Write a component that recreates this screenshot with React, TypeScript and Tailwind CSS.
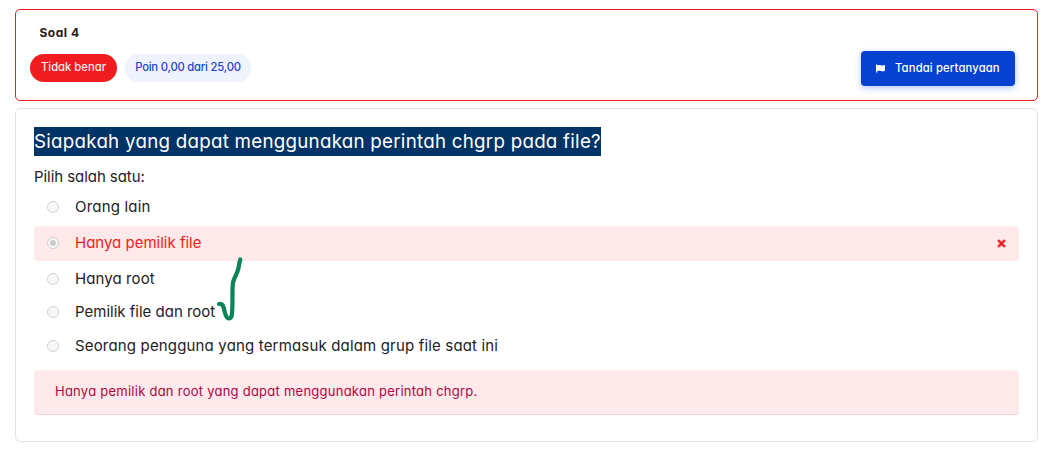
import type { ReactNode } from "react";
import { FaTimes } from "react-icons/fa";

type Option = {
  label: string;
  text: string;
  row: string;
  selected?: boolean;
};

const options: Option[] = [
  { label: "Orang lain", text: "pt-0.5 tracking-[0.2px]", row: "h-[33px]" },
  {
    label: "Hanya pemilik file",
    text: "",
    row: "mt-[3px] mb-px h-[35px] bg-[#ffe9ea] text-[#f11c20]",
    selected: true,
  },
  { label: "Hanya root", text: "pt-0.5 tracking-[0.1px]", row: "h-[33px]" },
  { label: "Pemilik file dan root", text: "pt-0.5", row: "h-[33px]" },
  {
    label: "Seorang pengguna yang termasuk dalam grup file saat ini",
    text: "pt-0.5 tracking-[0.165px]",
    row: "h-[35px]",
  },
];

function Badge({ className, children }: { className: string; children: ReactNode }) {
  return (
    <span className={`inline-flex h-7 items-center justify-center whitespace-nowrap rounded-full pb-0.5 text-[11.25px] font-medium ${className}`}>
      {children}
    </span>
  );
}

function Radio({ checked }: { checked?: boolean }) {
  return (
    <span
      role="radio"
      aria-checked={!!checked}
      className={`ml-[13px] grid size-3 shrink-0 place-items-center rounded-full border border-[#d1d1d1] bg-[#f8f8f8] ${
        checked ? "mb-0.5" : ""
      }`}
    >
      {checked && <span className="size-1.5 rounded-full bg-[#cbcbcb]" />}
    </span>
  );
}

function CheckStroke() {
  return (
    <svg
      viewBox="0 0 30 70"
      className="absolute left-[213px] top-[254px] h-[70px] w-[30px]"
      fill="none"
      stroke="#088457"
      strokeWidth="4.200"
      strokeLinecap="round"
      strokeLinejoin="round"
    >
      <path d="M6 50c2-.3 3.500.2 4.500 3c1.300 4.500 2.200 11.500 5.500 11.500c3 0 3-4 3.300-10.500c.5-10-.3-18 .7-25.500c1-5 4.500-9 5.500-14.500c.4-2.500 1-6 1.800-8.500" />
    </svg>
  );
}

export default function App() {
  return (
    <main className="relative h-[453px] bg-white pl-[15px] pr-[13px] pt-[9px] font-['Inter','Noto_Sans',sans-serif] text-[#1d2125] [font-feature-settings:'cv11']">
      <section className="flex h-[92px] justify-between rounded-[5px] border border-[#f11c20] pl-3.5 pr-[22px]">
        <div className="pt-3.5">
          <h3 className="pl-[9.5px] text-xs font-bold leading-[18px] tracking-[0.5px]">Soal 4</h3>
          <div className="mt-[12px] flex gap-2">
            <Badge className="w-[87px] bg-[#f11c20] text-[#ffeaea]">Tidak benar</Badge>
            <Badge className="w-[126px] bg-[#eff3fe] tracking-[-0.2px] text-[#1a44cd]">Poin 0,00 dari 25,00</Badge>
          </div>
        </div>
        <button className="mt-[41px] flex h-[35px] w-[154px] items-center rounded bg-[#0741d0] pl-[15px] text-[11.25px] font-medium text-white shadow-[0_2px_6px_rgba(7,65,208,0.3)]">
          <svg viewBox="0 0 10 9" className="mr-[9px] h-[9px] w-[10px] shrink-0" fill="currentColor">
            <path d="M0 .5h1.200v8H0zM1.200 1.500c1.500-.6 2.700-.4 3.900-.1c1.300.4 2.400.2 3.900-.3v5.600c-1.500.6-2.600.6-3.900.3c-1.200-.4-2.400-.5-3.900.1z" />
          </svg>
          <span className="whitespace-nowrap tracking-[0.15px]">Tandai pertanyaan</span>
        </button>
      </section>

      <section className="mt-[7px] h-[334px] rounded-[5px] border border-[#e3e4e6] px-[18px] pt-[18px]">
        <h2 className="w-[567px] whitespace-nowrap bg-[#003366] text-[18.75px] leading-[29px] tracking-[0.25px] text-white">
          Siapakah yang dapat menggunakan perintah chgrp pada file?
        </h2>
        <p className="mt-[10px] text-[15px] leading-[22px] tracking-[-0.06px]">Pilih salah satu:</p>

        <div role="radiogroup" className="mt-[2px]">
          {options.map((o) => (
            <div key={o.label} className={`flex items-center rounded ${o.row}`}>
              <Radio checked={o.selected} />
              <span className={`ml-4 whitespace-nowrap text-[15px] ${o.text}`}>{o.label}</span>
              {o.selected && (
                <FaTimes className="ml-auto mr-3 size-[11px]" stroke="currentColor" strokeWidth={28} />
              )}
            </div>
          ))}
        </div>

        <div className="mt-[7px] flex h-[45px] items-center rounded border-b border-[#fbd3d6] bg-[#ffe9ea] pl-[21px] text-[13px] tracking-[0.25px] text-[#ad0743]">
          Hanya pemilik dan root yang dapat menggunakan perintah chgrp.
        </div>
      </section>

      <CheckStroke />
    </main>
  );
}
